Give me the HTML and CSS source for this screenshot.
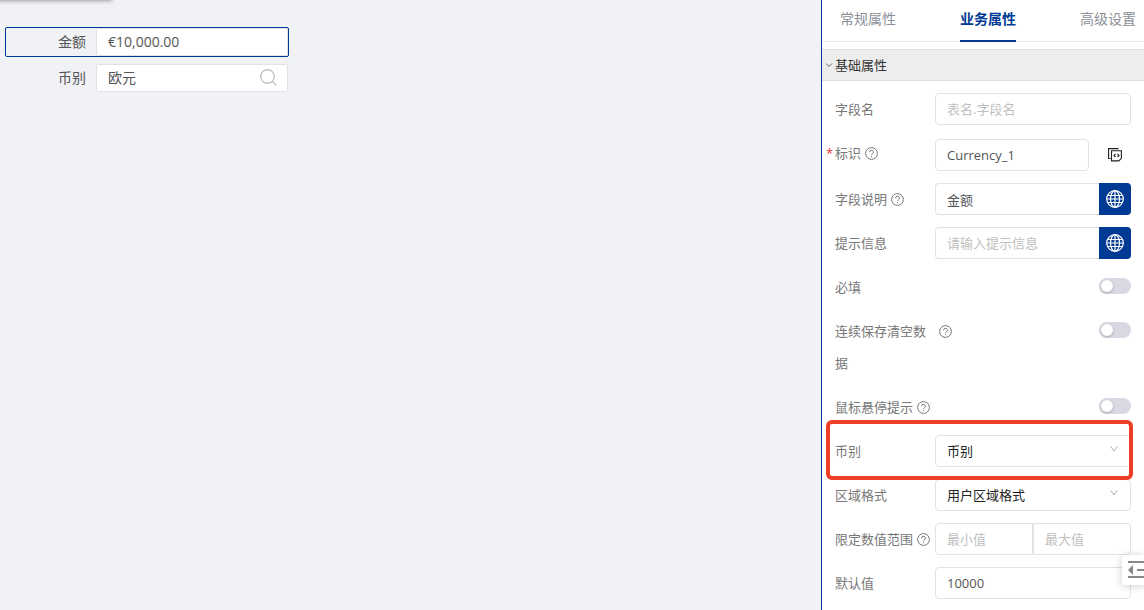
FILE: index.html
```html
<!DOCTYPE html>
<html lang="zh-CN">
<head>
<meta charset="utf-8">
<title>业务属性</title>
<link rel="stylesheet" href="styles.css">
</head>
<body>
<svg class="sprite" aria-hidden="true">
  <symbol id="help" viewBox="0 0 13 13"><g fill="none" stroke="currentColor"><circle cx="6.500" cy="6.500" r="5.900"/><path d="M4.600 5.200a1.900 1.900 0 1 1 2.700 1.700q-.8.4-.8 1.200"/></g><circle cx="6.500" cy="9.600" r=".65" fill="currentColor"/></symbol>
  <symbol id="globe" viewBox="0 0 18 18"><g fill="none" stroke="currentColor" stroke-width="1.200"><circle cx="9" cy="9" r="8.300"/><ellipse cx="9" cy="9" rx="4.500" ry="8.300"/><path d="M9 .7v16.600M1.700 5.500h14.600M1.700 12.500h14.600M.7 9h16.600"/></g></symbol>
  <symbol id="chevron" viewBox="0 0 8 6"><path d="M.8.6 4 5 7.200.6" fill="none" stroke="currentColor"/></symbol>
</svg>
<main class="canvas">
  <div class="toolbar-edge"></div>
  <form class="preview">
    <div class="preview-row selected">
      <label for="amount">金额</label>
      <input id="amount" type="text" value="€10,000.00">
    </div>
    <div class="preview-row">
      <label for="currency">币别</label>
      <input id="currency" type="text" value="欧元">
      <button class="search" type="button" aria-label="搜索"><svg viewBox="0 0 17 17" fill="none" stroke="currentColor" stroke-width="1.200"><circle cx="7.500" cy="7.500" r="6.800"/><path d="m12.300 12.300 4 4"/></svg></button>
    </div>
  </form>
</main>
<aside class="panel">
  <nav class="tabs">
    <a href="#general">常规属性</a>
    <a href="#business" class="active" aria-current="page">业务属性</a>
    <a href="#advanced">高级设置</a>
  </nav>
  <h2 class="group"><button type="button" aria-expanded="true"><svg viewBox="0 0 8 6"><path d="m1 1.500 3 3 3-3" fill="none" stroke="currentColor"/></svg>基础属性</button></h2>
  <form class="props">
    <div class="row">
      <div class="name"><label for="field">字段名</label></div>
      <input id="field" type="text" placeholder="表名.字段名">
    </div>
    <div class="row">
      <div class="name required"><label for="ident">标识</label><svg class="help"><use href="#help"/></svg></div>
      <div class="with-copy">
        <input id="ident" type="text" value="Currency_1">
        <button class="copy" type="button" aria-label="复制标识"><svg viewBox="0 0 14 14" fill="none" stroke="currentColor" stroke-width="1.100"><path d="M2.500 10.500H.6V.6h9.900"/><path d="M3.500 2.700h9.900v7.600l-2.600 2.600H3.500z"/><path d="M7.500 6 6 7.500 7.500 9M9.500 6 11 7.500 9.500 9"/></svg></button>
      </div>
    </div>
    <div class="row">
      <div class="name"><label for="desc">字段说明</label><svg class="help"><use href="#help"/></svg></div>
      <div class="with-globe">
        <input id="desc" type="text" value="金额">
        <button class="globe" type="button" aria-label="字段说明多语言"><svg><use href="#globe"/></svg></button>
      </div>
    </div>
    <div class="row">
      <div class="name"><label for="tip">提示信息</label></div>
      <div class="with-globe">
        <input id="tip" type="text" placeholder="请输入提示信息">
        <button class="globe" type="button" aria-label="提示信息多语言"><svg><use href="#globe"/></svg></button>
      </div>
    </div>
    <div class="row">
      <div class="name"><label for="must">必填</label></div>
      <input id="must" class="switch" type="checkbox" role="switch">
    </div>
    <div class="row">
      <div class="name wrapped"><label for="clear">连续保存清空数据</label><svg class="help"><use href="#help"/></svg></div>
      <input id="clear" class="switch" type="checkbox" role="switch">
    </div>
    <div class="row">
      <div class="name"><label for="hover">鼠标悬停提示</label><svg class="help"><use href="#help"/></svg></div>
      <input id="hover" class="switch" type="checkbox" role="switch">
    </div>
    <div class="row marked">
      <div class="name"><label for="cur">币别</label></div>
      <div class="dropdown"><select id="cur"><option>币别</option></select><svg><use href="#chevron"/></svg></div>
    </div>
    <div class="row">
      <div class="name"><label for="region">区域格式</label></div>
      <div class="dropdown"><select id="region"><option>用户区域格式</option></select><svg><use href="#chevron"/></svg></div>
    </div>
    <div class="row">
      <div class="name"><label for="min">限定数值范围</label><svg class="help"><use href="#help"/></svg></div>
      <div class="range">
        <input id="min" type="text" placeholder="最小值">
        <input id="max" type="text" placeholder="最大值" aria-label="最大值">
      </div>
    </div>
    <div class="row">
      <div class="name"><label for="def">默认值</label></div>
      <input id="def" type="text" value="10000">
    </div>
  </form>
  <button class="collapse" type="button" aria-label="收起面板"><svg viewBox="0 0 20 18"><path d="M0 1h20M9 9h11M0 16h20" fill="none" stroke="currentColor" stroke-width="2"/><path d="M0 9l5-5v10z" fill="currentColor"/></svg></button>
</aside>
</body>
</html>
```
FILE: styles.css
```css
* { box-sizing: border-box; }

body {
  margin: 0;
  display: flex;
  height: 100vh;
  overflow: hidden;
  background: #f0f2f6;
  font: 13px/20px "Open Sans", "Noto Sans CJK SC", sans-serif;
  color: #555;
}

input, select, button { font: inherit; color: inherit; margin: 0; }
button { padding: 0; border: 0; background: none; }
.sprite { position: absolute; width: 0; height: 0; }

.canvas { flex: 1; position: relative; padding: 27px 5px; overflow: hidden; }
.toolbar-edge {
  position: absolute;
  top: -10px;
  left: -10px;
  width: 122px;
  height: 10px;
  box-shadow: 0 0 5px rgba(0, 0, 0, .5);
}
.preview { display: grid; gap: 6px; max-width: 284px; font-size: 14px; }
.preview-row {
  display: grid;
  grid-template-columns: 90px 1fr;
  position: relative;
  border: 1px solid transparent;
  border-radius: 2px;
}
.preview-row label { padding-right: 10px; line-height: 28px; text-align: right; }
.preview-row input {
  width: 100%;
  min-width: 0;
  height: 28px;
  padding: 0 11px 2px;
  border: 1px solid #e2e3e6;
  border-radius: 2px;
  background: #fff;
}
.selected { border-color: #003a94; }
.search { position: absolute; right: 11px; top: 5px; width: 17px; height: 17px; color: #bbb; }
.search svg { display: block; width: 17px; height: 17px; }

.panel {
  flex: 0 0 323px;
  position: relative;
  border-left: 1px solid #003a94;
  background: #fff;
}
.tabs {
  display: flex;
  gap: 64px;
  height: 42px;
  padding-left: 18px;
  box-shadow: inset 0 -1px #ececec;
  font-size: 14px;
  line-height: 38px;
}
.tabs a { flex: none; color: #8a8f98; text-decoration: none; }
.tabs .active { color: #003a94; font-weight: 700; border-bottom: 2px solid #003a94; }

.group {
  margin: 7px 0 0;
  border: 1px solid #e0e0e0;
  border-width: 1px 0;
  background: #ededed;
  font-size: 13px;
  font-weight: 400;
}
.group button {
  display: flex;
  align-items: center;
  gap: 2px;
  width: 100%;
  height: 30px;
  padding-left: 3px;
  color: #333;
}
.group svg { width: 8px; height: 6px; color: #666; }

.props { display: grid; gap: 12px; padding: 12px 13px; }
.row {
  display: grid;
  grid-template-columns: 100px 1fr;
  position: relative;
}
.name { display: flex; position: relative; align-items: flex-start; gap: 4px; line-height: 32px; color: #777; white-space: nowrap; }
.wrapped { gap: 12px; }
.wrapped label { flex: 0 0 92px; white-space: normal; }
.help { flex: none; width: 13px; height: 13px; margin-top: 10px; color: #777; }
.required::before { content: "*"; position: absolute; left: -9px; color: #f03030; }

.props input[type="text"], .props select {
  width: 100%;
  min-width: 0;
  height: 32px;
  padding: 0 11px;
  border: 1px solid #e2e2e2;
  border-radius: 4px;
  background: #fff;
}
.props input::placeholder { color: #bfbfbf; opacity: 1; }

.with-copy { display: grid; grid-template-columns: 1fr 32px; gap: 10px; padding-top: 2px; }
.copy { display: grid; place-items: center; color: #222; }
.copy svg { width: 14px; height: 14px; }
.with-globe { display: grid; grid-template-columns: 1fr 32px; }
.props .with-globe input { border-right: 0; border-radius: 4px 0 0 4px; }
.globe { display: grid; place-items: center; border-radius: 0 4px 4px 0; background: #003a94; color: #fff; }
.globe svg { width: 18px; height: 18px; }

.switch {
  appearance: none;
  justify-self: end;
  width: 32px;
  height: 16px;
  margin-top: 7px;
  padding: 2px;
  border-radius: 8px;
  background: #d9d9e3;
}
.switch::before {
  content: "";
  display: block;
  width: 12px;
  height: 12px;
  border-radius: 50%;
  background: #fff;
  box-shadow: 0 1px 3px rgba(0, 0, 0, .25);
}

.dropdown { position: relative; }
.props select { appearance: none; color: #222; }
.dropdown svg { position: absolute; right: 13px; top: 11px; width: 8px; height: 6px; color: #aaa; pointer-events: none; }
.marked::after {
  content: "";
  position: absolute;
  z-index: 1;
  inset: -15px -2px -13px -9px;
  border: 4px solid #ee3d26;
  border-radius: 6px;
  pointer-events: none;
}

.range { display: grid; grid-template-columns: 1fr 1fr; }
.props .range input:first-child { border-radius: 4px 0 0 4px; }
.props .range input:last-child { border-radius: 0 4px 4px 0; }

.collapse {
  position: absolute;
  right: 0;
  bottom: 25px;
  width: 22px;
  height: 30px;
  padding-left: 6px;
  overflow: hidden;
  border-radius: 4px 0 0 4px;
  background: #fff;
  box-shadow: 0 1px 8px rgba(0, 0, 0, .2);
  color: #888;
}
.collapse svg { display: block; width: 20px; height: 18px; }
```
